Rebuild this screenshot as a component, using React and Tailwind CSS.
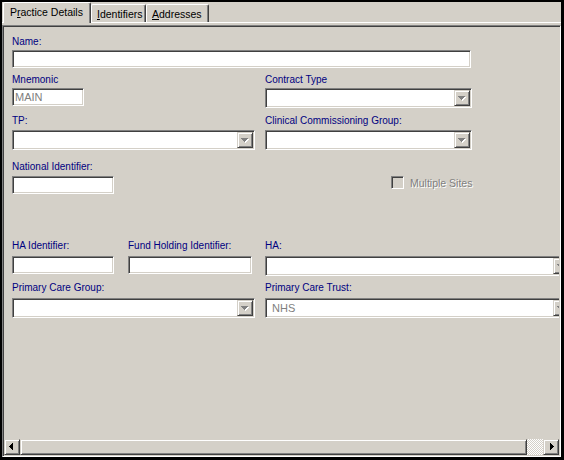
import React from "react";

const SUNKEN =
  "border border-t-[#808080] border-l-[#808080] border-b-white border-r-white shadow-[inset_1px_1px_0_#404040,inset_-1px_-1px_0_#d4d0c8]";
const RAISED =
  "border border-t-[#d4d0c8] border-l-[#d4d0c8] border-b-[#404040] border-r-[#404040] shadow-[inset_1px_1px_0_#ffffff,inset_-1px_-1px_0_#808080]";

function Label({ children }) {
  return (
    <div className="h-[12px] whitespace-nowrap text-[10px] leading-[12px] text-[#000080]">
      {children}
    </div>
  );
}

function Field({ label, gap, className = "", children }) {
  return (
    <div className={"flex shrink-0 flex-col " + className}>
      <Label>{label}</Label>
      <div className={gap}>{children}</div>
    </div>
  );
}

function Edit({ w, value }) {
  return (
    <div
      className={
        SUNKEN +
        " h-[18px] bg-white px-[2px] text-[11px] leading-[16px] text-[#808080] whitespace-nowrap " +
        w
      }
    >
      {value}
    </div>
  );
}

function DownArrow() {
  return (
    <svg width="14" height="14" viewBox="0 0 14 14" shapeRendering="crispEdges">
      <g fill="#ffffff">
        <rect x="4" y="6" width="7" height="1" />
        <rect x="5" y="7" width="5" height="1" />
        <rect x="6" y="8" width="3" height="1" />
        <rect x="7" y="9" width="1" height="1" />
      </g>
      <g fill="#808080">
        <rect x="3" y="5" width="7" height="1" />
        <rect x="4" y="6" width="5" height="1" />
        <rect x="5" y="7" width="3" height="1" />
        <rect x="6" y="8" width="1" height="1" />
      </g>
    </svg>
  );
}

function Combo({ w, value }) {
  return (
    <div className={SUNKEN + " flex h-[20px] shrink-0 bg-white p-[1px] " + w}>
      <div className="flex-1 overflow-hidden whitespace-nowrap pl-[5px] text-[11px] leading-[16px] text-[#808080]">
        {value}
      </div>
      <div className={RAISED + " h-[16px] w-[16px] shrink-0 bg-[#d4d0c8]"}>
        <DownArrow />
      </div>
    </div>
  );
}

function ScrollBtn({ dir }) {
  return (
    <div className={RAISED + " h-[16px] w-[16px] shrink-0 bg-[#d4d0c8]"}>
      <svg width="14" height="14" viewBox="0 0 14 14" shapeRendering="crispEdges">
        {dir === "left" ? (
          <g fill="#000000">
            <rect x="4" y="6" width="1" height="1" />
            <rect x="5" y="5" width="1" height="3" />
            <rect x="6" y="4" width="1" height="5" />
            <rect x="7" y="3" width="1" height="7" />
          </g>
        ) : (
          <g fill="#000000">
            <rect x="6" y="3" width="1" height="7" />
            <rect x="7" y="4" width="1" height="5" />
            <rect x="8" y="5" width="1" height="3" />
            <rect x="9" y="6" width="1" height="1" />
          </g>
        )}
      </svg>
    </div>
  );
}

function Tab({ active, width, pad, children }) {
  if (active) {
    return (
      <div
        className={
          "relative z-10 -mb-[1px] h-[21px] shrink-0 rounded-t-[2px] border-t border-l border-r border-t-white border-l-white border-r-[#404040] bg-[#d4d0c8] pt-[3px] text-[10.5px] leading-[12px] text-black whitespace-nowrap shadow-[inset_-1px_0_0_#808080] " +
          width +
          " " +
          pad
        }
      >
        {children}
      </div>
    );
  }
  return (
    <div
      className={
        "h-[18px] shrink-0 rounded-t-[2px] border-t border-l border-r border-t-white border-l-white border-r-[#404040] bg-[#d4d0c8] pt-[3px] text-[10.5px] leading-[12px] text-black whitespace-nowrap shadow-[inset_-1px_0_0_#808080] " +
        width +
        " " +
        pad
      }
    >
      {children}
    </div>
  );
}

export default function App() {
  return (
    <div className="h-[460px] w-[564px] bg-black pt-[2px] pl-[2px] pr-[3px] pb-[3px] font-['Liberation_Sans',Arial,sans-serif]">
      <div className="flex h-full flex-col bg-[#d4d0c8]">
        {/* Tabs */}
        <div className="flex h-[20px] shrink-0 items-end pl-[1px]">
          <Tab active width="w-[88px]" pad="pl-[6px]">
            P<span className="underline underline-offset-[1px]">r</span>actice Details
          </Tab>
          <Tab width="w-[55px]" pad="pl-[5px]">
            <span className="underline underline-offset-[1px]">I</span>dentifiers
          </Tab>
          <Tab width="w-[63px]" pad="pl-[5px]">
            <span className="underline underline-offset-[1px]">A</span>ddresses
          </Tab>
        </div>

        {/* Panel */}
        <div className="flex min-h-0 flex-1 flex-col border-t border-t-white pt-[2px]">
          <div className={SUNKEN + " flex min-h-0 flex-1 flex-col p-[1px]"}>
            <div className="min-h-0 flex-1 overflow-hidden pl-[8px] pt-[9px]">
              <div className="flex flex-col">
                {/* Row 1 */}
                <div className="flex">
                  <Field label="Name:" gap="mt-[2px]">
                    <Edit w="w-[459px]" />
                  </Field>
                </div>

                {/* Row 2 */}
                <div className="mt-[6px] flex">
                  <div className="flex w-[253px] shrink-0">
                    <Field label="Mnemonic" gap="mt-[2px]">
                      <Edit w="w-[72px]" value="MAIN" />
                    </Field>
                  </div>
                  <Field label="Contract Type" gap="mt-[2px]">
                    <Combo w="w-[207px]" />
                  </Field>
                </div>

                {/* Row 3 */}
                <div className="mt-[7px] flex">
                  <div className="flex w-[253px] shrink-0">
                    <Field label="TP:" gap="mt-[3px]">
                      <Combo w="w-[243px]" />
                    </Field>
                  </div>
                  <Field label="Clinical Commissioning Group:" gap="mt-[3px]">
                    <Combo w="w-[207px]" />
                  </Field>
                </div>

                {/* Row 4 */}
                <div className="mt-[11px] flex items-start">
                  <Field label="National Identifier:" gap="mt-[3px]">
                    <Edit w="w-[102px]" />
                  </Field>
                  <div className="ml-[277px] mt-[15px] flex shrink-0 items-center gap-[6px]">
                    <div className={SUNKEN + " h-[13px] w-[13px] bg-[#d4d0c8]"} />
                    <span className="whitespace-nowrap text-[10.5px] leading-[12px] text-[#808080] [text-shadow:1px_1px_0_#ffffff]">
                      Multiple Sites
                    </span>
                  </div>
                </div>

                {/* Row 5 */}
                <div className="mt-[46px] flex">
                  <div className="flex w-[253px] shrink-0">
                    <Field label="HA Identifier:" gap="mt-[4px]">
                      <Edit w="w-[102px]" />
                    </Field>
                    <Field label="Fund Holding Identifier:" gap="mt-[4px]" className="ml-[14px]">
                      <Edit w="w-[124px]" />
                    </Field>
                  </div>
                  <Field label="HA:" gap="mt-[4px]">
                    <Combo w="w-[306px]" />
                  </Field>
                </div>

                {/* Row 6 */}
                <div className="mt-[6px] flex">
                  <div className="flex w-[253px] shrink-0">
                    <Field label="Primary Care Group:" gap="mt-[4px]">
                      <Combo w="w-[243px]" />
                    </Field>
                  </div>
                  <Field label="Primary Care Trust:" gap="mt-[4px]">
                    <Combo w="w-[306px]" value="NHS" />
                  </Field>
                </div>
              </div>
            </div>

            {/* Horizontal scrollbar */}
            <div className="flex h-[16px] shrink-0">
              <ScrollBtn dir="left" />
              <div className={RAISED + " h-[16px] w-[507px] shrink-0 bg-[#d4d0c8]"} />
              <div className="h-[16px] flex-1 bg-[image:repeating-conic-gradient(#ffffff_0%_25%,#d4d0c8_0%_50%)] bg-[length:2px_2px]" />
              <ScrollBtn dir="right" />
            </div>
          </div>
        </div>
      </div>
    </div>
  );
}
